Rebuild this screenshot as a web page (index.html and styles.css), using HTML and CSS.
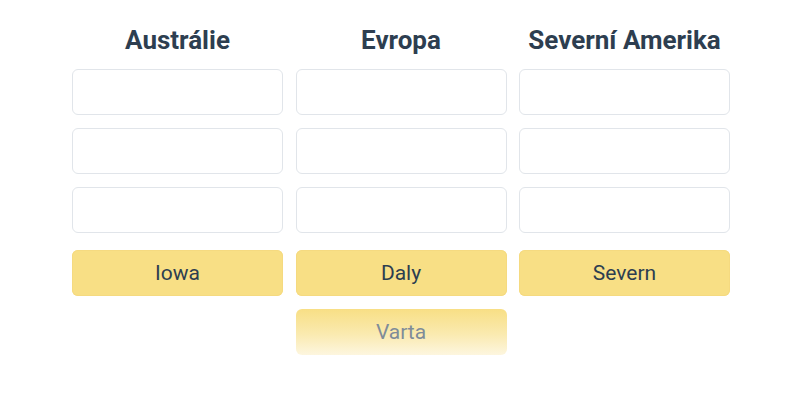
FILE: index.html
```html
<!DOCTYPE html>
<html>
<head>
<meta charset="utf-8">
<link rel="stylesheet" href="styles.css">
</head>
<body>
<div class="board">
  <div class="col">
    <h2 class="title">Austrálie</h2>
    <div class="slot"></div>
    <div class="slot"></div>
    <div class="slot"></div>
    <div class="card">Iowa</div>
  </div>
  <div class="col">
    <h2 class="title">Evropa</h2>
    <div class="slot"></div>
    <div class="slot"></div>
    <div class="slot"></div>
    <div class="card">Daly</div>
    <div class="card ghost">Varta</div>
  </div>
  <div class="col">
    <h2 class="title">Severní Amerika</h2>
    <div class="slot"></div>
    <div class="slot"></div>
    <div class="slot"></div>
    <div class="card">Severn</div>
  </div>
</div>
</body>
</html>
```

FILE: styles.css
```css
html, body {
  margin: 0;
  padding: 0;
  background: #ffffff;
  font-family: Roboto, "Liberation Sans", sans-serif;
}
.board {
  display: grid;
  grid-template-columns: repeat(3, 211px);
  column-gap: 12.5px;
  justify-content: center;
  padding: 24px 0 0 2px;
}
.col {
  display: flex;
  flex-direction: column;
  gap: 13px;
}
.title {
  margin: 0;
  height: 32px;
  line-height: 32px;
  font-size: 26px;
  font-weight: 700;
  color: #2d3e50;
  text-align: center;
}
.slot {
  height: 44px;
  border: 1px solid #e1e5ea;
  border-radius: 6px;
  background: #fff;
}
.slot + .card {
  margin-top: 4px;
}
.card {
  height: 46px;
  border-radius: 6px;
  background: #f8df85;
  box-shadow: inset 0 0 0 1px #f5da80;
  color: #2d3e50;
  font-size: 21px;
  line-height: 46px;
  text-align: center;
}
.ghost {
  margin-top: 0;
  background: linear-gradient(to bottom, #f8df85 0%, #faeab0 55%, #fdf6df 100%);
  box-shadow: none;
  color: #7f8c99;
}
```
